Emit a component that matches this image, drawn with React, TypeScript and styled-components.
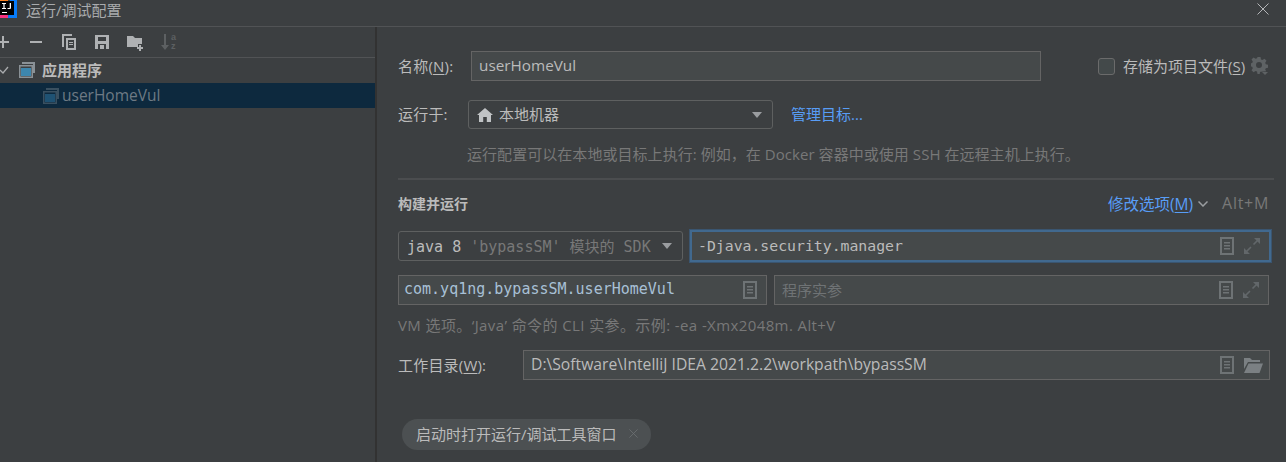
import React from "react";
import styled, { createGlobalStyle } from "styled-components";

const UI_FONT = `"Open Sans", "Noto Sans CJK SC", sans-serif`;
const MONO_FONT = `"DejaVu Sans Mono", "Noto Sans CJK SC", monospace`;

const GlobalStyle = createGlobalStyle`
  html, body { margin: 0; padding: 0; background: #3c3f41; overflow: hidden; }
  body { font-family: ${UI_FONT}; color: #bbbbbb; }
`;

const Window = styled.div`
  width: 1286px;
  height: 462px;
  overflow: hidden;
  display: flex;
  flex-direction: column;
  background: #3c3f41;
`;

const TitleBar = styled.div`
  box-sizing: border-box;
  height: 27px;
  flex: none;
  display: flex;
  align-items: center;
  border-bottom: 1px solid #515355;
  padding: 0 17px 8px 0;
`;

const TitleText = styled.span`
  font-size: 15px;
  color: #a9abad;
  margin-left: 9px;
  flex: 1;
`;

const Body = styled.div`
  flex: 1;
  display: flex;
  min-height: 0;
`;

const Sidebar = styled.div`
  width: 375px;
  flex: none;
  border-right: 2px solid #323232;
`;

const Toolbar = styled.div`
  height: 30px;
  display: flex;
  align-items: center;
  gap: 17px;
  margin-left: -5px;
  border-bottom: 1px solid #515355;
`;

const TreeRow = styled.div<{ $selected?: boolean }>`
  height: 25px;
  display: flex;
  align-items: center;
  background: ${(p) => (p.$selected ? "#0d293e" : "transparent")};
  padding-left: ${(p) => (p.$selected ? "42px" : "0")};
  padding-bottom: ${(p) => (p.$selected ? "0" : "2px")};
  box-sizing: border-box;
  gap: 2px;
`;

const TreeGroupLabel = styled.span`
  font-size: 15px;
  font-weight: 700;
  color: #bbbbbb;
  margin-left: 4px;
`;

const TreeItemLabel = styled.span`
  font-size: 15.5px;
  color: #6e7a84;
  position: relative;
  top: -1px;
`;

const Content = styled.div`
  flex: 1;
  padding: 24px 16px 0 21px;
  display: flex;
  flex-direction: column;
`;

const Row = styled.div<{ $top?: number; $gap?: number; $height?: number }>`
  display: flex;
  align-items: center;
  margin-top: ${(p) => p.$top ?? 0}px;
  gap: ${(p) => p.$gap ?? 0}px;
  height: ${(p) => p.$height ?? 30}px;
`;

const Label = styled.span<{ $width: number }>`
  width: ${(p) => p.$width}px;
  flex: none;
  font-size: 15px;
  letter-spacing: 0.2px;
  color: #bbbbbb;
  padding-bottom: 2px;
  u { text-underline-offset: 2px; }
`;

const Field = styled.div<{ $width?: number; $focus?: boolean; $mono?: boolean; $right?: number }>`
  box-sizing: border-box;
  ${(p) => (p.$width ? `width: ${p.$width}px; flex: none;` : "flex: 1;")}
  height: 30px;
  display: flex;
  align-items: center;
  gap: 10px;
  padding: 0 ${(p) => p.$right ?? 9}px 0 ${(p) => (p.$mono ? "5px" : "7px")};
  background: #45494a;
  border: 1px solid #646464;
  font-family: ${(p) => (p.$mono ? MONO_FONT : UI_FONT)};
  ${(p) =>
    p.$focus &&
    `
    height: 32px;
    margin-left: 7px;
    border: 2px solid #41698f;
    box-shadow: 0 0 0 1px #3a5570;
    padding-left: 6px;
    padding-right: 9px;
    margin-right: -1px;
  `}
`;

const FieldText = styled.span<{ $size?: number; $color?: string }>`
  flex: 1;
  white-space: nowrap;
  font-size: ${(p) => p.$size ?? 15.3}px;
  color: ${(p) => p.$color ?? "#bbbbbb"};
  padding-bottom: 2px;
`;

const Combo = styled.div<{ $width: number; $height?: number; $mono?: boolean }>`
  box-sizing: border-box;
  width: ${(p) => p.$width}px;
  flex: none;
  height: ${(p) => p.$height ?? 30}px;
  display: flex;
  align-items: center;
  gap: 6px;
  padding: 0 10px 0 8px;
  border: 1px solid #5e6060;
  border-radius: 3px;
  background: #3c3f41;
  font-family: ${(p) => (p.$mono ? MONO_FONT : UI_FONT)};
`;

const ComboText = styled.span`
  flex: 1;
  white-space: nowrap;
  font-size: 15px;
  color: #bbbbbb;
  padding-bottom: 2px;
`;

const Dim = styled.span`
  color: #787878;
`;

const Caret = styled.span`
  width: 0;
  height: 0;
  flex: none;
  border-left: 5.5px solid transparent;
  border-right: 5.5px solid transparent;
  border-top: 6px solid #9a9da0;
`;

const Link = styled.span<{ $size?: number }>`
  font-size: ${(p) => p.$size ?? 15}px;
  color: #589df6;
  margin-left: 18px;
  padding-bottom: 2px;
  u { text-underline-offset: 2px; }
`;

const Hint = styled.div<{ $top: number; $indent?: number; $spacing?: number }>`
  height: 20px;
  line-height: 20px;
  margin-top: ${(p) => p.$top}px;
  margin-left: ${(p) => p.$indent ?? 0}px;
  font-size: 15px;
  letter-spacing: ${(p) => p.$spacing ?? 0}px;
  color: #787878;
  white-space: nowrap;
`;

const Divider = styled.div`
  height: 2px;
  background: #4b4d4f;
  margin-top: 14px;
  margin-right: -4px;
`;

const SectionTitle = styled.span`
  flex: 1;
  font-size: 14px;
  font-weight: 700;
  color: #bbbbbb;
  padding-bottom: 2px;
`;

const Shortcut = styled.span`
  font-size: 16px;
  letter-spacing: 0.7px;
  color: #787878;
  margin-left: 14px;
  margin-right: 1px;
  padding-bottom: 2px;
`;

const Checkbox = styled.span`
  box-sizing: border-box;
  width: 17px;
  height: 17px;
  margin-left: 57px;
  border: 1px solid #6b6b6b;
  border-radius: 3px;
  background: #43494a;
  flex: none;
`;

const CheckLabel = styled.span`
  font-size: 15px;
  color: #bbbbbb;
  margin-left: 8px;
  white-space: nowrap;
  padding-bottom: 2px;
  u { text-underline-offset: 2px; }
`;

const Chip = styled.div`
  align-self: flex-start;
  box-sizing: border-box;
  width: 249px;
  height: 31px;
  margin-top: 39px;
  margin-left: 4px;
  padding: 0 0 2px 14px;
  display: flex;
  align-items: center;
  gap: 12px;
  border-radius: 16px;
  background: #4c5052;
  font-size: 15px;
  color: #bbbbbb;
  white-space: nowrap;
`;

const Doc = () => (
  <svg width="14" height="18" viewBox="0 0 14 18" style={{ flex: "none" }}>
    <path fill="#6e7375" fillRule="evenodd" d="M0 0h14v18H0zM2 2v14h10V2z" />
    <path fill="#6e7375" d="M4 5h6v1.5H4zM4 8h6v1.5H4zM4 11h6v1.5H4z" />
  </svg>
);

const Expand = () => (
  <svg width="16" height="16" viewBox="0 0 16 16" style={{ flex: "none" }} fill="none">
    <path stroke="#62676a" strokeWidth="1.6" d="M9.5 6.5 15 1M2 14l5-5" />
    <path fill="#62676a" d="M10 0h6v6zM0 10v6h6z" />
  </svg>
);

const Folder = () => (
  <svg width="19" height="15" viewBox="0 0 19 15" style={{ flex: "none" }}>
    <path fill="#7b8083" d="M0 0h6l2 2h8v2H4L0 11z" />
    <path fill="#7b8083" d="M4.5 5.5H19L15.5 15H0z" />
  </svg>
);

const AppIcon = ({ dim }: { dim?: boolean }) => (
  <svg width="18" height="18" viewBox="0 0 18 18" style={{ flex: "none" }}>
    <path fill={dim ? "#3a5060" : "#8a9196"} fillRule="evenodd" d="M4 1h13v11h-2V3H4z" />
    <path fill={dim ? "#3a5060" : "#8a9196"} fillRule="evenodd" d="M1 4h14v13H1zM2.5 5.5v10h11v-10z" />
    <rect x="3" y="7" width="10" height="8" fill={dim ? "#1f5273" : "#3d86ad"} />
  </svg>
);

const IdeaLogo = () => (
  <svg width="17" height="18" viewBox="0 0 17 18" style={{ flex: "none" }}>
    <path fill="#f5317f" d="M0 1h8v17H0z" />
    <path fill="#fc801d" d="M0 0h8v5H0z" />
    <path fill="#087cfa" d="M10 0h7v18H8z" />
    <rect x="0" y="1" width="14" height="14" fill="#000" />
    <path fill="#fff" d="M2 3h4v1H4.6v4H6v1H2V8h1.4V4H2zM7 3h4v5q0 1-1 1H7.500V8H9.700V3H7zM2 12h5v1H2z" />
  </svg>
);

const GearIcon = () => (
  <svg width="18" height="18" viewBox="0 0 18 18" style={{ flex: "none", marginLeft: 6 }}>
    <path
      fill="#5e6264"
      fillRule="evenodd"
      d="M6.500 0h3l.5 2.400 1.400.6 2.100-1.300 2 2-1.300 2.100.6 1.400 2.200.5v3l-2.200.5-.6 1.400 1 1.600-5.500.5-.7.300-.3 2H6.500L6 14.600 4.600 14l-2.100 1.300-2-2L1.800 11.200 1.200 9.800-.5 9.300V6.500L1.200 6l.6-1.400L.5 2.500l2-2L4.600 1.800 6 1.200zM8 5a3 3 0 1 0 0 6 3 3 0 0 0 0-6z"
    />
    <path fill="#5e6264" d="M11 15h6l-3 3z" />
  </svg>
);

const CloseX = ({ size, color }: { size: number; color: string }) => (
  <svg width={size} height={size} viewBox="0 0 12 12" style={{ flex: "none" }}>
    <path stroke={color} strokeWidth="1" fill="none" d="M.5.5l11 11M11.500.5l-11 11" />
  </svg>
);

const ChevronDown = () => (
  <svg width="10" height="6" viewBox="0 0 10 6" style={{ flex: "none", marginLeft: 5 }}>
    <path stroke="#9a9da0" strokeWidth="1.500" fill="none" d="M.5.5 5 5 9.500.5" />
  </svg>
);

const Home = () => (
  <svg width="16" height="14" viewBox="0 0 16 14" style={{ flex: "none" }}>
    <path fill="#c0c3c5" d="M8 0l8 7h-2v7H9.800V9H6.200v5H2V7H0z" />
  </svg>
);

const ToolIcon = ({ d, color = "#afb1b3" }: { d: string; color?: string }) => (
  <svg width="16" height="18" viewBox="0 0 16 18" style={{ flex: "none" }}>
    <path fill={color} fillRule="evenodd" d={d} />
  </svg>
);

const SortIcon = () => (
  <svg width="18" height="18" viewBox="0 0 18 18" style={{ flex: "none" }}>
    <path fill="#5d6062" d="M4 1h2v11h3l-4 5-4-5h3z" />
    <text x="11" y="7" fontSize="9" fontWeight="700" fill="#5d6062" fontFamily="Liberation Sans, sans-serif">a</text>
    <text x="11" y="16" fontSize="9" fontWeight="700" fill="#5d6062" fontFamily="Liberation Sans, sans-serif">z</text>
  </svg>
);

const App: React.FC = () => (
  <Window>
    <GlobalStyle />
    <TitleBar>
      <IdeaLogo />
      <TitleText>运行/调试配置</TitleText>
      <CloseX size={12} color="#b4b6b8" />
    </TitleBar>
    <Body>
      <Sidebar>
        <Toolbar>
          <ToolIcon d="M7 3h2v5h5v2H9v5H7v-5H2V8h5z" />
          <ToolIcon d="M2 8h12v2H2z" />
          <ToolIcon d="M1 1h10v2H3v11H1zM5 5h10v12H5zM7 7v8h6V7zM8 9h4v1H8zM8 11h4v1H8z" />
          <ToolIcon d="M1 2h14v14H1zM4 4v4h8V4zM4 11v5h8v-5zM6 12h4v4H6z" />
          <ToolIcon d="M0 3h6l2 2h7v6h-4v3H0zM12 12h2v2h2v2h-2v2h-2v-2h-2v-2h2z" />
          <SortIcon />
        </Toolbar>
        <TreeRow>
          <svg width="10" height="8" viewBox="0 0 10 8" style={{ marginRight: 6 }}>
            <path stroke="#a9abad" strokeWidth="1.300" fill="none" d="M0 4l3 3 5-6" />
          </svg>
          <AppIcon />
          <TreeGroupLabel>应用程序</TreeGroupLabel>
        </TreeRow>
        <TreeRow $selected>
          <AppIcon dim />
          <TreeItemLabel>userHomeVul</TreeItemLabel>
        </TreeRow>
      </Sidebar>
      <Content>
        <Row>
          <Label $width={73}>
            名称(<u>N</u>):
          </Label>
          <Field $width={570}>
            <FieldText>userHomeVul</FieldText>
          </Field>
          <Checkbox />
          <CheckLabel>
            存储为项目文件(<u>S</u>)
          </CheckLabel>
          <GearIcon />
        </Row>
        <Row $top={19} $height={29}>
          <Label $width={70}>运行于:</Label>
          <Combo $width={305} $height={29}>
            <Home />
            <ComboText>本地机器</ComboText>
            <Caret />
          </Combo>
          <Link>管理目标...</Link>
        </Row>
        <Hint $top={15} $indent={69} $spacing={0.05}>
          运行配置可以在本地或目标上执行: 例如，在 Docker 容器中或使用 SSH 在远程主机上执行。
        </Hint>
        <Divider />
        <Row $top={9}>
          <SectionTitle>构建并运行</SectionTitle>
          <Link $size={15.5}>
            修改选项(<u>M</u>)
          </Link>
          <ChevronDown />
          <Shortcut>Alt+M</Shortcut>
        </Row>
        <Row $top={11} $height={32}>
          <Combo $width={285} $mono>
            <ComboText>
              java 8 <Dim>'bypassSM' 模块的 SDK</Dim>
            </ComboText>
            <Caret />
          </Combo>
          <Field $focus $mono>
            <FieldText $size={14.8}>-Djava.security.manager</FieldText>
            <Doc />
            <Expand />
          </Field>
        </Row>
        <Row $top={13} $gap={7}>
          <Field $width={369} $mono>
            <FieldText $size={15} $color="#a8c0d6">com.yq1ng.bypassSM.userHomeVul</FieldText>
            <Doc />
          </Field>
          <Field $width={495}>
            <FieldText $size={15} $color="#6f7375">程序实参</FieldText>
            <Doc />
            <Expand />
          </Field>
        </Row>
        <Hint $top={10} $spacing={0.4}>
          VM 选项。‘Java’ 命令的 CLI 实参。示例: -ea -Xmx2048m. Alt+V
        </Hint>
        <Row $top={15}>
          <Label $width={125}>
            工作目录(<u>W</u>):
          </Label>
          <Field $width={747} $right={6}>
            <FieldText $size={15.7}>D:\Software\IntelliJ IDEA 2021.2.2\workpath\bypassSM</FieldText>
            <Doc />
            <Folder />
          </Field>
        </Row>
        <Chip>
          启动时打开运行/调试工具窗口
          <CloseX size={9} color="#6f7375" />
        </Chip>
      </Content>
    </Body>
  </Window>
);

export default App;
